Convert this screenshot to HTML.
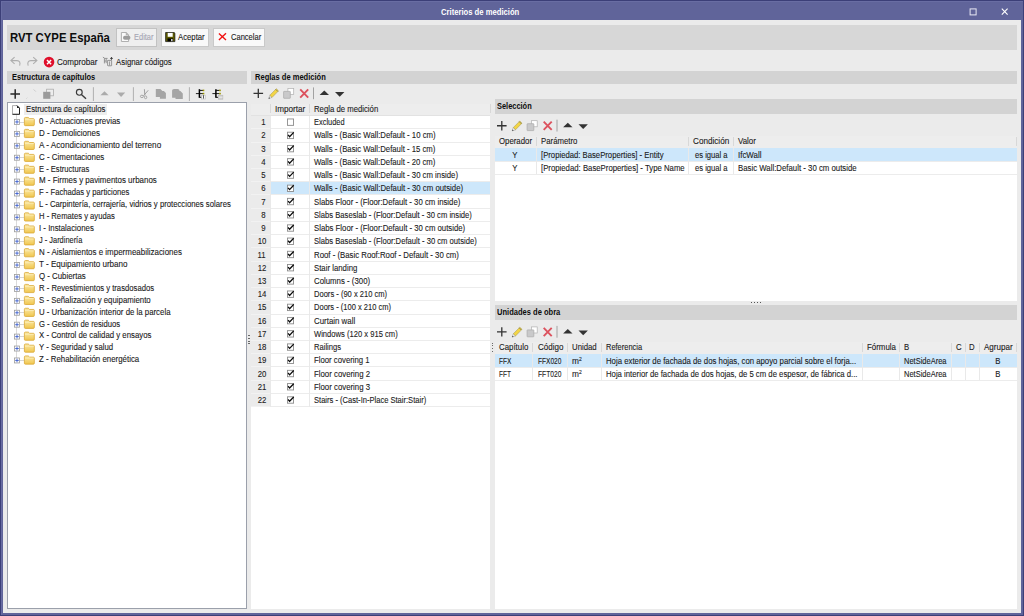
<!DOCTYPE html><html lang="es"><head><meta charset="utf-8"><title>Criterios de medición</title><style>
html,body{margin:0;padding:0}
body{width:1024px;height:616px;overflow:hidden;background:#60649a;position:relative;
 font-family:"Liberation Sans",sans-serif;font-size:8.4px;color:#1a1a1a;}
div,span,svg{position:absolute;box-sizing:border-box}
svg{overflow:visible}
.t{white-space:nowrap;line-height:12px;height:12px;-webkit-text-stroke:0.1px currentColor}
.b{font-weight:bold;color:#0c0c0c;-webkit-text-stroke:0}
.band{background:#d3d3d3}
.btn{border:1px solid #c9c9c9;background:#f9f9f9;top:28px;height:18.3px}
.hl{background:#ececec;height:1px}
.vl{background:#e9e9e9;width:1px}
.hs{background:#d8d8d8;width:1px}
.sel{background:#cde7fb}
.cb{width:7.2px;height:7.4px;border:0.8px solid #8d8d8d;background:#fff}
</style></head><body>
<div class="" style="left:0px;top:0px;width:1024px;height:616px;border:1px solid #3c3f78;"></div>
<div class="" style="left:1px;top:1px;width:1022px;height:1px;background:#696da3"></div>
<div class="" style="left:1px;top:1px;width:1px;height:614px;background:#696da3"></div>
<span class="t b" style="left:441.10px;top:6px;transform:scaleX(0.8508);transform-origin:0 50%;color:#fff;font-size:9px">Criterios de medición</span>
<svg style="left:965px;top:5px" width="50" height="14" viewBox="0 0 50 14"><rect x="5.1" y="3.9" width="6" height="6" fill="none" stroke="#e8e8f4" stroke-width="1"/><path d="M36.8 3.6 L42.6 9.6 M42.6 3.6 L36.8 9.6" stroke="#fff" stroke-width="1.1" fill="none"/></svg>
<div class="" style="left:3.1px;top:20px;width:1017.5px;height:592.7px;background:#ebebeb"></div>
<div class="" style="left:7px;top:25px;width:1010px;height:25px;background:#d7d7d7"></div>
<span class="t b" style="left:9.90px;top:30px;transform:scaleX(0.8853);transform-origin:0 50%;;font-size:12.8px;line-height:16px;height:16px">RVT CYPE España</span>
<div class="btn" style="left:116.2px;top:28px;width:40.6px;height:19px;background:#efefef;border-color:#c2c2c2"></div>
<div class="btn" style="left:161.4px;top:28px;width:47.7px;height:19px;"></div>
<div class="btn" style="left:213.4px;top:28px;width:51.2px;height:19px;"></div>
<svg style="left:120px;top:31px" width="12" height="12" viewBox="0 0 12 12"><path d="M1.4 1.5 H6.2 L8.6 3.9 V10.5 H1.4 Z" fill="#fafafa" stroke="#a8a8a8" stroke-width="0.9"/><path d="M6.2 1.5 V3.9 H8.6" fill="#bbb" stroke="#a8a8a8" stroke-width="0.7"/><rect x="3" y="4.8" width="7.4" height="3.9" rx="1.9" fill="#9c9c9c"/></svg>
<span class="t " style="left:133.50px;top:31px;transform:scaleX(0.8908);transform-origin:0 50%;color:#a4a4b2">Editar</span>
<svg style="left:165px;top:32px" width="11" height="10" viewBox="0 0 11 10"><g transform="translate(0.2 0.1)"><path d="M0.4 0.4 H9 L9.7 1.1 V9.5 H0.4 Z" fill="#5d5a00" stroke="#111" stroke-width="0.7"/><rect x="2.5" y="0.8" width="5" height="3.9" fill="#fff"/><rect x="2.3" y="6.3" width="5.6" height="2.9" fill="#000"/><rect x="6" y="6.9" width="1.3" height="2.2" fill="#fff"/></g></svg>
<span class="t " style="left:178.20px;top:31px;transform:scaleX(0.9247);transform-origin:0 50%">Aceptar</span>
<svg style="left:218px;top:32px" width="9" height="8" viewBox="0 0 9 8"><g transform="translate(0.0 0.6)"><path d="M0.9 0.8 L8 7.3 M8 0.6 L0.9 7.4" stroke="#f01010" stroke-width="1.35" fill="none"/></g></svg>
<span class="t " style="left:230.50px;top:31px;transform:scaleX(0.9007);transform-origin:0 50%">Cancelar</span>
<svg style="left:9px;top:55px" width="50" height="14" viewBox="0 0 50 14"><path d="M5.6 2.2 L1.9 5.6 L5.6 8.9 M2 5.6 H8 C10.6 5.6 11.6 7.8 10.6 10.6" fill="none" stroke="#aeaeae" stroke-width="1.1"/><path d="M24.2 2.2 L27.9 5.6 L24.2 8.9 M27.8 5.6 H21.8 C19.2 5.6 18.2 7.8 19.2 10.6" fill="none" stroke="#aeaeae" stroke-width="1.1"/><circle cx="40.05" cy="7.1" r="5.3" fill="#df0f2b"/><path d="M38 5 L42.1 9.2 M42.1 5 L38 9.2" stroke="#fff" stroke-width="1.5" fill="none"/></svg>
<span class="t " style="left:57.00px;top:56px;transform:scaleX(0.9641);transform-origin:0 50%">Comprobar</span>
<svg style="left:102px;top:56px" width="12" height="11" viewBox="0 0 12 11"><path d="M0.9 1.1 L2.8 2.4 H5.6 M2.4 2.4 V7.4 M4.2 2.6 V7.2 M2.4 5 H4.2 M5.6 4.4 V9.8 M5.6 4.4 H9.6 V9.8 M7.6 5.4 V9.4 M6 9.8 H9.4" fill="none" stroke="#808080" stroke-width="0.8"/><path d="M9.5 1 V3.8 M8.1 2.4 H10.9" stroke="#3c3c3c" stroke-width="0.9"/></svg>
<span class="t " style="left:116.00px;top:56px;transform:scaleX(0.9363);transform-origin:0 50%">Asignar códigos</span>
<div class="band" style="left:7px;top:71.1px;width:240px;height:12.7px;"></div>
<span class="t b" style="left:11.50px;top:71px;transform:scaleX(0.8939);transform-origin:0 50%">Estructura de capítulos</span>
<svg style="left:8px;top:86px" width="240" height="16" viewBox="0 0 240 16"><path d="M2.4 8 H12 M7.2 3.3 V12.7" stroke="#262626" stroke-width="1.5" fill="none"/><path d="M18.4 12.6 l0.9 -0.9 M25.6 3.4 l2.2 2.2" stroke="#c4c4c4" stroke-width="0.8" fill="none"/><rect x="38.6" y="3.2" width="6.8" height="6.6" fill="#ededed" stroke="#adadad" stroke-width="0.8"/><rect x="35.2" y="5.8" width="7.2" height="7" fill="#9b9b9b"/><circle cx="71.3" cy="6.3" r="2.9" fill="none" stroke="#3a3a3a" stroke-width="1.15"/><path d="M73.4 8.5 L78 12.7" stroke="#3a3a3a" stroke-width="1.4"/><path d="M85.4 1.2 V15" stroke="#a9a9a9" stroke-width="0.9"/><path d="M92.4 9.2 L96.5 5.3 L100.6 9.2 Z" fill="#ababab"/><path d="M109 6.6 L113.1 10.9 L117.2 6.6 Z" fill="#ababab"/><path d="M125.4 1.2 V15" stroke="#a9a9a9" stroke-width="0.9"/><path d="M136.4 3.2 L136.8 9.2 M140.2 4.3 L135.4 10" stroke="#9c9c9c" stroke-width="0.95" fill="none"/><ellipse cx="133.9" cy="10.4" rx="1.5" ry="1.2" fill="none" stroke="#9c9c9c" stroke-width="0.85"/><ellipse cx="137.6" cy="11.3" rx="1.2" ry="1.4" fill="none" stroke="#9c9c9c" stroke-width="0.85"/><path d="M147.8 3.1 H152.4 L154.4 5.1 V10.9 H147.8 Z M151.9 5.1 H155.9 L157.9 7.1 V12.7 H151.9 Z" fill="#a5a5a5"/><path d="M164.1 11.8 V4.6 Q164.1 3 166 3 H169.6 Q171.5 3 171.5 4.6 V11.8 Z M167.5 5 H172.4 L174.8 7.4 V13 H167.5 Z" fill="#a5a5a5"/><path d="M181.4 1.2 V15" stroke="#a9a9a9" stroke-width="0.9"/><path d="M187.9 7.6 H195" stroke="#222" stroke-width="1"/><path d="M191.4 3.2 V11.8" stroke="#000" stroke-width="1.5"/><path d="M191.4 4.4 H195 M191.4 11.3 H193.6" stroke="#111" stroke-width="1"/><rect x="194.7" y="3.6" width="1.6" height="1.6" fill="#9c9600"/><rect x="194.7" y="6.8" width="1.6" height="1.6" fill="#9c9600"/><rect x="193.7" y="9.2" width="3.9" height="3.8" fill="#f4f4f4" stroke="#b0b0b0" stroke-width="0.5"/><path d="M195.5 9.2 V12.6" stroke="#333" stroke-width="0.8"/><path d="M204.4 7.6 H211.5" stroke="#222" stroke-width="1"/><path d="M207.9 3.2 V11.8" stroke="#000" stroke-width="1.5"/><path d="M207.9 4.4 H211.5 M207.9 11.3 H210.2" stroke="#111" stroke-width="1"/><rect x="211.2" y="3.6" width="1.6" height="1.6" fill="#9c9600"/><rect x="211.2" y="6.8" width="1.6" height="1.6" fill="#9c9600"/><rect x="210.4" y="9.2" width="4.5" height="4" fill="#cfcfcf" stroke="#b4b4b4" stroke-width="0.5"/><path d="M210.8 11.2 H214.5" stroke="#f4f4f4" stroke-width="0.8"/></svg>
<div class="" style="left:7px;top:101.9px;width:240px;height:507px;background:#fff;border:0.9px solid #9ba0ab"></div>
<svg style="left:11px;top:104px" width="9" height="11" viewBox="0 0 9 11"><g transform="translate(0.6 0.7)"><path d="M0.9 0.9 H5.4 L7.9 3.4 V9.6 H0.9 Z" fill="#fff" stroke="#9a9a9a" stroke-width="0.8"/><path d="M5.4 0.9 L7.9 3.4 V9.6 H0.9" fill="none" stroke="#111" stroke-width="0.9"/><path d="M5.4 0.9 V3.4 H7.9 Z" fill="#222"/></g></svg>
<div class="" style="left:24.3px;top:104.1px;width:83px;height:10.6px;background:#ededed"></div>
<span class="t " style="left:26.10px;top:103px;transform:scaleX(0.9270);transform-origin:0 50%">Estructura de capítulos</span>
<svg width="0" height="0" style="left:0;top:0"><defs><linearGradient id="fg" x1="0" y1="0" x2="0" y2="1"><stop offset="0" stop-color="#fbe9a6"/><stop offset="1" stop-color="#f0c64e"/></linearGradient></defs></svg>
<div class="" style="left:16.4px;top:115px;width:0.9px;height:245.45px;background:#dadada"></div>
<div class="" style="left:19.6px;top:121.5px;width:4.5px;height:0.9px;background:#d6d6d6"></div>
<svg style="left:13px;top:118px" width="7" height="7" viewBox="0 0 7 7"><g transform="translate(0.7 0.65)"><rect x="0.8" y="0.8" width="5" height="5" fill="#fff" stroke="#9c9c9c" stroke-width="0.8"/><path d="M1.5 3.3 H5.1 M3.3 1.5 V5.1" stroke="#3558cc" stroke-width="0.85"/></g></svg>
<svg style="left:23px;top:116px" width="12" height="10" viewBox="0 0 12 10"><g transform="translate(0.3 0.55)"><path d="M1.1 2 Q1.1 0.9 2.1 0.9 H4.6 Q5.3 0.9 5.7 1.5 L6.2 2.1 H10.1 Q11 2.1 11 3 V8.2 Q11 9.1 10.1 9.1 H2 Q1.1 9.1 1.1 8.2 Z" fill="url(#fg)" stroke="#d9a733" stroke-width="0.8"/><path d="M1.6 3.1 H10.5" stroke="#fdf3c8" stroke-width="0.6"/></g></svg>
<span class="t " style="left:39.20px;top:115px;transform:scaleX(0.9377);transform-origin:0 50%">0 - Actuaciones previas</span>
<div class="" style="left:19.6px;top:133.43px;width:4.5px;height:0.9px;background:#d6d6d6"></div>
<svg style="left:13px;top:130px" width="7" height="7" viewBox="0 0 7 7"><g transform="translate(0.7 0.57)"><rect x="0.8" y="0.8" width="5" height="5" fill="#fff" stroke="#9c9c9c" stroke-width="0.8"/><path d="M1.5 3.3 H5.1 M3.3 1.5 V5.1" stroke="#3558cc" stroke-width="0.85"/></g></svg>
<svg style="left:23px;top:128px" width="12" height="10" viewBox="0 0 12 10"><g transform="translate(0.3 0.47)"><path d="M1.1 2 Q1.1 0.9 2.1 0.9 H4.6 Q5.3 0.9 5.7 1.5 L6.2 2.1 H10.1 Q11 2.1 11 3 V8.2 Q11 9.1 10.1 9.1 H2 Q1.1 9.1 1.1 8.2 Z" fill="url(#fg)" stroke="#d9a733" stroke-width="0.8"/><path d="M1.6 3.1 H10.5" stroke="#fdf3c8" stroke-width="0.6"/></g></svg>
<span class="t " style="left:39.20px;top:127px;transform:scaleX(0.9551);transform-origin:0 50%">D - Demoliciones</span>
<div class="" style="left:19.6px;top:145.35px;width:4.5px;height:0.9px;background:#d6d6d6"></div>
<svg style="left:13px;top:142px" width="7" height="7" viewBox="0 0 7 7"><g transform="translate(0.7 0.5)"><rect x="0.8" y="0.8" width="5" height="5" fill="#fff" stroke="#9c9c9c" stroke-width="0.8"/><path d="M1.5 3.3 H5.1 M3.3 1.5 V5.1" stroke="#3558cc" stroke-width="0.85"/></g></svg>
<svg style="left:23px;top:140px" width="12" height="10" viewBox="0 0 12 10"><g transform="translate(0.3 0.4)"><path d="M1.1 2 Q1.1 0.9 2.1 0.9 H4.6 Q5.3 0.9 5.7 1.5 L6.2 2.1 H10.1 Q11 2.1 11 3 V8.2 Q11 9.1 10.1 9.1 H2 Q1.1 9.1 1.1 8.2 Z" fill="url(#fg)" stroke="#d9a733" stroke-width="0.8"/><path d="M1.6 3.1 H10.5" stroke="#fdf3c8" stroke-width="0.6"/></g></svg>
<span class="t " style="left:39.20px;top:139px;transform:scaleX(0.9756);transform-origin:0 50%">A - Acondicionamiento del terreno</span>
<div class="" style="left:19.6px;top:157.28px;width:4.5px;height:0.9px;background:#d6d6d6"></div>
<svg style="left:13px;top:154px" width="7" height="7" viewBox="0 0 7 7"><g transform="translate(0.7 0.42)"><rect x="0.8" y="0.8" width="5" height="5" fill="#fff" stroke="#9c9c9c" stroke-width="0.8"/><path d="M1.5 3.3 H5.1 M3.3 1.5 V5.1" stroke="#3558cc" stroke-width="0.85"/></g></svg>
<svg style="left:23px;top:152px" width="12" height="10" viewBox="0 0 12 10"><g transform="translate(0.3 0.32)"><path d="M1.1 2 Q1.1 0.9 2.1 0.9 H4.6 Q5.3 0.9 5.7 1.5 L6.2 2.1 H10.1 Q11 2.1 11 3 V8.2 Q11 9.1 10.1 9.1 H2 Q1.1 9.1 1.1 8.2 Z" fill="url(#fg)" stroke="#d9a733" stroke-width="0.8"/><path d="M1.6 3.1 H10.5" stroke="#fdf3c8" stroke-width="0.6"/></g></svg>
<span class="t " style="left:39.20px;top:151px;transform:scaleX(0.9479);transform-origin:0 50%">C - Cimentaciones</span>
<div class="" style="left:19.6px;top:169.2px;width:4.5px;height:0.9px;background:#d6d6d6"></div>
<svg style="left:13px;top:166px" width="7" height="7" viewBox="0 0 7 7"><g transform="translate(0.7 0.35)"><rect x="0.8" y="0.8" width="5" height="5" fill="#fff" stroke="#9c9c9c" stroke-width="0.8"/><path d="M1.5 3.3 H5.1 M3.3 1.5 V5.1" stroke="#3558cc" stroke-width="0.85"/></g></svg>
<svg style="left:23px;top:164px" width="12" height="10" viewBox="0 0 12 10"><g transform="translate(0.3 0.25)"><path d="M1.1 2 Q1.1 0.9 2.1 0.9 H4.6 Q5.3 0.9 5.7 1.5 L6.2 2.1 H10.1 Q11 2.1 11 3 V8.2 Q11 9.1 10.1 9.1 H2 Q1.1 9.1 1.1 8.2 Z" fill="url(#fg)" stroke="#d9a733" stroke-width="0.8"/><path d="M1.6 3.1 H10.5" stroke="#fdf3c8" stroke-width="0.6"/></g></svg>
<span class="t " style="left:39.20px;top:163px;transform:scaleX(0.9063);transform-origin:0 50%">E - Estructuras</span>
<div class="" style="left:19.6px;top:181.12px;width:4.5px;height:0.9px;background:#d6d6d6"></div>
<svg style="left:13px;top:178px" width="7" height="7" viewBox="0 0 7 7"><g transform="translate(0.7 0.27)"><rect x="0.8" y="0.8" width="5" height="5" fill="#fff" stroke="#9c9c9c" stroke-width="0.8"/><path d="M1.5 3.3 H5.1 M3.3 1.5 V5.1" stroke="#3558cc" stroke-width="0.85"/></g></svg>
<svg style="left:23px;top:176px" width="12" height="10" viewBox="0 0 12 10"><g transform="translate(0.3 0.17)"><path d="M1.1 2 Q1.1 0.9 2.1 0.9 H4.6 Q5.3 0.9 5.7 1.5 L6.2 2.1 H10.1 Q11 2.1 11 3 V8.2 Q11 9.1 10.1 9.1 H2 Q1.1 9.1 1.1 8.2 Z" fill="url(#fg)" stroke="#d9a733" stroke-width="0.8"/><path d="M1.6 3.1 H10.5" stroke="#fdf3c8" stroke-width="0.6"/></g></svg>
<span class="t " style="left:39.20px;top:174px;transform:scaleX(0.9479);transform-origin:0 50%">M - Firmes y pavimentos urbanos</span>
<div class="" style="left:19.6px;top:193.05px;width:4.5px;height:0.9px;background:#d6d6d6"></div>
<svg style="left:13px;top:190px" width="7" height="7" viewBox="0 0 7 7"><g transform="translate(0.7 0.2)"><rect x="0.8" y="0.8" width="5" height="5" fill="#fff" stroke="#9c9c9c" stroke-width="0.8"/><path d="M1.5 3.3 H5.1 M3.3 1.5 V5.1" stroke="#3558cc" stroke-width="0.85"/></g></svg>
<svg style="left:23px;top:188px" width="12" height="10" viewBox="0 0 12 10"><g transform="translate(0.3 0.1)"><path d="M1.1 2 Q1.1 0.9 2.1 0.9 H4.6 Q5.3 0.9 5.7 1.5 L6.2 2.1 H10.1 Q11 2.1 11 3 V8.2 Q11 9.1 10.1 9.1 H2 Q1.1 9.1 1.1 8.2 Z" fill="url(#fg)" stroke="#d9a733" stroke-width="0.8"/><path d="M1.6 3.1 H10.5" stroke="#fdf3c8" stroke-width="0.6"/></g></svg>
<span class="t " style="left:39.20px;top:186px;transform:scaleX(0.9160);transform-origin:0 50%">F - Fachadas y particiones</span>
<div class="" style="left:19.6px;top:204.97px;width:4.5px;height:0.9px;background:#d6d6d6"></div>
<svg style="left:13px;top:202px" width="7" height="7" viewBox="0 0 7 7"><g transform="translate(0.7 0.12)"><rect x="0.8" y="0.8" width="5" height="5" fill="#fff" stroke="#9c9c9c" stroke-width="0.8"/><path d="M1.5 3.3 H5.1 M3.3 1.5 V5.1" stroke="#3558cc" stroke-width="0.85"/></g></svg>
<svg style="left:23px;top:200px" width="12" height="10" viewBox="0 0 12 10"><g transform="translate(0.3 0.02)"><path d="M1.1 2 Q1.1 0.9 2.1 0.9 H4.6 Q5.3 0.9 5.7 1.5 L6.2 2.1 H10.1 Q11 2.1 11 3 V8.2 Q11 9.1 10.1 9.1 H2 Q1.1 9.1 1.1 8.2 Z" fill="url(#fg)" stroke="#d9a733" stroke-width="0.8"/><path d="M1.6 3.1 H10.5" stroke="#fdf3c8" stroke-width="0.6"/></g></svg>
<span class="t " style="left:39.20px;top:198px;transform:scaleX(0.9232);transform-origin:0 50%">L - Carpintería, cerrajería, vidrios y protecciones solares</span>
<div class="" style="left:19.6px;top:216.9px;width:4.5px;height:0.9px;background:#d6d6d6"></div>
<svg style="left:13px;top:214px" width="7" height="7" viewBox="0 0 7 7"><g transform="translate(0.7 0.05)"><rect x="0.8" y="0.8" width="5" height="5" fill="#fff" stroke="#9c9c9c" stroke-width="0.8"/><path d="M1.5 3.3 H5.1 M3.3 1.5 V5.1" stroke="#3558cc" stroke-width="0.85"/></g></svg>
<svg style="left:23px;top:211px" width="12" height="10" viewBox="0 0 12 10"><g transform="translate(0.3 0.95)"><path d="M1.1 2 Q1.1 0.9 2.1 0.9 H4.6 Q5.3 0.9 5.7 1.5 L6.2 2.1 H10.1 Q11 2.1 11 3 V8.2 Q11 9.1 10.1 9.1 H2 Q1.1 9.1 1.1 8.2 Z" fill="url(#fg)" stroke="#d9a733" stroke-width="0.8"/><path d="M1.6 3.1 H10.5" stroke="#fdf3c8" stroke-width="0.6"/></g></svg>
<span class="t " style="left:39.20px;top:210px;transform:scaleX(0.9148);transform-origin:0 50%">H - Remates y ayudas</span>
<div class="" style="left:19.6px;top:228.83px;width:4.5px;height:0.9px;background:#d6d6d6"></div>
<svg style="left:13px;top:225px" width="7" height="7" viewBox="0 0 7 7"><g transform="translate(0.7 0.97)"><rect x="0.8" y="0.8" width="5" height="5" fill="#fff" stroke="#9c9c9c" stroke-width="0.8"/><path d="M1.5 3.3 H5.1 M3.3 1.5 V5.1" stroke="#3558cc" stroke-width="0.85"/></g></svg>
<svg style="left:23px;top:223px" width="12" height="10" viewBox="0 0 12 10"><g transform="translate(0.3 0.88)"><path d="M1.1 2 Q1.1 0.9 2.1 0.9 H4.6 Q5.3 0.9 5.7 1.5 L6.2 2.1 H10.1 Q11 2.1 11 3 V8.2 Q11 9.1 10.1 9.1 H2 Q1.1 9.1 1.1 8.2 Z" fill="url(#fg)" stroke="#d9a733" stroke-width="0.8"/><path d="M1.6 3.1 H10.5" stroke="#fdf3c8" stroke-width="0.6"/></g></svg>
<span class="t " style="left:39.20px;top:222px;transform:scaleX(0.9343);transform-origin:0 50%">I - Instalaciones</span>
<div class="" style="left:19.6px;top:240.75px;width:4.5px;height:0.9px;background:#d6d6d6"></div>
<svg style="left:13px;top:237px" width="7" height="7" viewBox="0 0 7 7"><g transform="translate(0.7 0.9)"><rect x="0.8" y="0.8" width="5" height="5" fill="#fff" stroke="#9c9c9c" stroke-width="0.8"/><path d="M1.5 3.3 H5.1 M3.3 1.5 V5.1" stroke="#3558cc" stroke-width="0.85"/></g></svg>
<svg style="left:23px;top:235px" width="12" height="10" viewBox="0 0 12 10"><g transform="translate(0.3 0.8)"><path d="M1.1 2 Q1.1 0.9 2.1 0.9 H4.6 Q5.3 0.9 5.7 1.5 L6.2 2.1 H10.1 Q11 2.1 11 3 V8.2 Q11 9.1 10.1 9.1 H2 Q1.1 9.1 1.1 8.2 Z" fill="url(#fg)" stroke="#d9a733" stroke-width="0.8"/><path d="M1.6 3.1 H10.5" stroke="#fdf3c8" stroke-width="0.6"/></g></svg>
<span class="t " style="left:39.20px;top:234px;transform:scaleX(0.8859);transform-origin:0 50%">J - Jardinería</span>
<div class="" style="left:19.6px;top:252.68px;width:4.5px;height:0.9px;background:#d6d6d6"></div>
<svg style="left:13px;top:249px" width="7" height="7" viewBox="0 0 7 7"><g transform="translate(0.7 0.82)"><rect x="0.8" y="0.8" width="5" height="5" fill="#fff" stroke="#9c9c9c" stroke-width="0.8"/><path d="M1.5 3.3 H5.1 M3.3 1.5 V5.1" stroke="#3558cc" stroke-width="0.85"/></g></svg>
<svg style="left:23px;top:247px" width="12" height="10" viewBox="0 0 12 10"><g transform="translate(0.3 0.72)"><path d="M1.1 2 Q1.1 0.9 2.1 0.9 H4.6 Q5.3 0.9 5.7 1.5 L6.2 2.1 H10.1 Q11 2.1 11 3 V8.2 Q11 9.1 10.1 9.1 H2 Q1.1 9.1 1.1 8.2 Z" fill="url(#fg)" stroke="#d9a733" stroke-width="0.8"/><path d="M1.6 3.1 H10.5" stroke="#fdf3c8" stroke-width="0.6"/></g></svg>
<span class="t " style="left:39.20px;top:246px;transform:scaleX(0.9504);transform-origin:0 50%">N - Aislamientos e impermeabilizaciones</span>
<div class="" style="left:19.6px;top:264.6px;width:4.5px;height:0.9px;background:#d6d6d6"></div>
<svg style="left:13px;top:261px" width="7" height="7" viewBox="0 0 7 7"><g transform="translate(0.7 0.75)"><rect x="0.8" y="0.8" width="5" height="5" fill="#fff" stroke="#9c9c9c" stroke-width="0.8"/><path d="M1.5 3.3 H5.1 M3.3 1.5 V5.1" stroke="#3558cc" stroke-width="0.85"/></g></svg>
<svg style="left:23px;top:259px" width="12" height="10" viewBox="0 0 12 10"><g transform="translate(0.3 0.65)"><path d="M1.1 2 Q1.1 0.9 2.1 0.9 H4.6 Q5.3 0.9 5.7 1.5 L6.2 2.1 H10.1 Q11 2.1 11 3 V8.2 Q11 9.1 10.1 9.1 H2 Q1.1 9.1 1.1 8.2 Z" fill="url(#fg)" stroke="#d9a733" stroke-width="0.8"/><path d="M1.6 3.1 H10.5" stroke="#fdf3c8" stroke-width="0.6"/></g></svg>
<span class="t " style="left:39.20px;top:258px;transform:scaleX(0.9616);transform-origin:0 50%">T - Equipamiento urbano</span>
<div class="" style="left:19.6px;top:276.53px;width:4.5px;height:0.9px;background:#d6d6d6"></div>
<svg style="left:13px;top:273px" width="7" height="7" viewBox="0 0 7 7"><g transform="translate(0.7 0.68)"><rect x="0.8" y="0.8" width="5" height="5" fill="#fff" stroke="#9c9c9c" stroke-width="0.8"/><path d="M1.5 3.3 H5.1 M3.3 1.5 V5.1" stroke="#3558cc" stroke-width="0.85"/></g></svg>
<svg style="left:23px;top:271px" width="12" height="10" viewBox="0 0 12 10"><g transform="translate(0.3 0.57)"><path d="M1.1 2 Q1.1 0.9 2.1 0.9 H4.6 Q5.3 0.9 5.7 1.5 L6.2 2.1 H10.1 Q11 2.1 11 3 V8.2 Q11 9.1 10.1 9.1 H2 Q1.1 9.1 1.1 8.2 Z" fill="url(#fg)" stroke="#d9a733" stroke-width="0.8"/><path d="M1.6 3.1 H10.5" stroke="#fdf3c8" stroke-width="0.6"/></g></svg>
<span class="t " style="left:39.20px;top:270px;transform:scaleX(0.9375);transform-origin:0 50%">Q - Cubiertas</span>
<div class="" style="left:19.6px;top:288.45px;width:4.5px;height:0.9px;background:#d6d6d6"></div>
<svg style="left:13px;top:285px" width="7" height="7" viewBox="0 0 7 7"><g transform="translate(0.7 0.6)"><rect x="0.8" y="0.8" width="5" height="5" fill="#fff" stroke="#9c9c9c" stroke-width="0.8"/><path d="M1.5 3.3 H5.1 M3.3 1.5 V5.1" stroke="#3558cc" stroke-width="0.85"/></g></svg>
<svg style="left:23px;top:283px" width="12" height="10" viewBox="0 0 12 10"><g transform="translate(0.3 0.5)"><path d="M1.1 2 Q1.1 0.9 2.1 0.9 H4.6 Q5.3 0.9 5.7 1.5 L6.2 2.1 H10.1 Q11 2.1 11 3 V8.2 Q11 9.1 10.1 9.1 H2 Q1.1 9.1 1.1 8.2 Z" fill="url(#fg)" stroke="#d9a733" stroke-width="0.8"/><path d="M1.6 3.1 H10.5" stroke="#fdf3c8" stroke-width="0.6"/></g></svg>
<span class="t " style="left:39.20px;top:282px;transform:scaleX(0.9192);transform-origin:0 50%">R - Revestimientos y trasdosados</span>
<div class="" style="left:19.6px;top:300.38px;width:4.5px;height:0.9px;background:#d6d6d6"></div>
<svg style="left:13px;top:297px" width="7" height="7" viewBox="0 0 7 7"><g transform="translate(0.7 0.53)"><rect x="0.8" y="0.8" width="5" height="5" fill="#fff" stroke="#9c9c9c" stroke-width="0.8"/><path d="M1.5 3.3 H5.1 M3.3 1.5 V5.1" stroke="#3558cc" stroke-width="0.85"/></g></svg>
<svg style="left:23px;top:295px" width="12" height="10" viewBox="0 0 12 10"><g transform="translate(0.3 0.43)"><path d="M1.1 2 Q1.1 0.9 2.1 0.9 H4.6 Q5.3 0.9 5.7 1.5 L6.2 2.1 H10.1 Q11 2.1 11 3 V8.2 Q11 9.1 10.1 9.1 H2 Q1.1 9.1 1.1 8.2 Z" fill="url(#fg)" stroke="#d9a733" stroke-width="0.8"/><path d="M1.6 3.1 H10.5" stroke="#fdf3c8" stroke-width="0.6"/></g></svg>
<span class="t " style="left:39.20px;top:294px;transform:scaleX(0.9335);transform-origin:0 50%">S - Señalización y equipamiento</span>
<div class="" style="left:19.6px;top:312.3px;width:4.5px;height:0.9px;background:#d6d6d6"></div>
<svg style="left:13px;top:309px" width="7" height="7" viewBox="0 0 7 7"><g transform="translate(0.7 0.45)"><rect x="0.8" y="0.8" width="5" height="5" fill="#fff" stroke="#9c9c9c" stroke-width="0.8"/><path d="M1.5 3.3 H5.1 M3.3 1.5 V5.1" stroke="#3558cc" stroke-width="0.85"/></g></svg>
<svg style="left:23px;top:307px" width="12" height="10" viewBox="0 0 12 10"><g transform="translate(0.3 0.35)"><path d="M1.1 2 Q1.1 0.9 2.1 0.9 H4.6 Q5.3 0.9 5.7 1.5 L6.2 2.1 H10.1 Q11 2.1 11 3 V8.2 Q11 9.1 10.1 9.1 H2 Q1.1 9.1 1.1 8.2 Z" fill="url(#fg)" stroke="#d9a733" stroke-width="0.8"/><path d="M1.6 3.1 H10.5" stroke="#fdf3c8" stroke-width="0.6"/></g></svg>
<span class="t " style="left:39.20px;top:306px;transform:scaleX(0.9353);transform-origin:0 50%">U - Urbanización interior de la parcela</span>
<div class="" style="left:19.6px;top:324.23px;width:4.5px;height:0.9px;background:#d6d6d6"></div>
<svg style="left:13px;top:321px" width="7" height="7" viewBox="0 0 7 7"><g transform="translate(0.7 0.38)"><rect x="0.8" y="0.8" width="5" height="5" fill="#fff" stroke="#9c9c9c" stroke-width="0.8"/><path d="M1.5 3.3 H5.1 M3.3 1.5 V5.1" stroke="#3558cc" stroke-width="0.85"/></g></svg>
<svg style="left:23px;top:319px" width="12" height="10" viewBox="0 0 12 10"><g transform="translate(0.3 0.28)"><path d="M1.1 2 Q1.1 0.9 2.1 0.9 H4.6 Q5.3 0.9 5.7 1.5 L6.2 2.1 H10.1 Q11 2.1 11 3 V8.2 Q11 9.1 10.1 9.1 H2 Q1.1 9.1 1.1 8.2 Z" fill="url(#fg)" stroke="#d9a733" stroke-width="0.8"/><path d="M1.6 3.1 H10.5" stroke="#fdf3c8" stroke-width="0.6"/></g></svg>
<span class="t " style="left:39.20px;top:318px;transform:scaleX(0.9180);transform-origin:0 50%">G - Gestión de residuos</span>
<div class="" style="left:19.6px;top:336.15px;width:4.5px;height:0.9px;background:#d6d6d6"></div>
<svg style="left:13px;top:333px" width="7" height="7" viewBox="0 0 7 7"><g transform="translate(0.7 0.3)"><rect x="0.8" y="0.8" width="5" height="5" fill="#fff" stroke="#9c9c9c" stroke-width="0.8"/><path d="M1.5 3.3 H5.1 M3.3 1.5 V5.1" stroke="#3558cc" stroke-width="0.85"/></g></svg>
<svg style="left:23px;top:331px" width="12" height="10" viewBox="0 0 12 10"><g transform="translate(0.3 0.2)"><path d="M1.1 2 Q1.1 0.9 2.1 0.9 H4.6 Q5.3 0.9 5.7 1.5 L6.2 2.1 H10.1 Q11 2.1 11 3 V8.2 Q11 9.1 10.1 9.1 H2 Q1.1 9.1 1.1 8.2 Z" fill="url(#fg)" stroke="#d9a733" stroke-width="0.8"/><path d="M1.6 3.1 H10.5" stroke="#fdf3c8" stroke-width="0.6"/></g></svg>
<span class="t " style="left:39.20px;top:329px;transform:scaleX(0.9322);transform-origin:0 50%">X - Control de calidad y ensayos</span>
<div class="" style="left:19.6px;top:348.08px;width:4.5px;height:0.9px;background:#d6d6d6"></div>
<svg style="left:13px;top:345px" width="7" height="7" viewBox="0 0 7 7"><g transform="translate(0.7 0.23)"><rect x="0.8" y="0.8" width="5" height="5" fill="#fff" stroke="#9c9c9c" stroke-width="0.8"/><path d="M1.5 3.3 H5.1 M3.3 1.5 V5.1" stroke="#3558cc" stroke-width="0.85"/></g></svg>
<svg style="left:23px;top:343px" width="12" height="10" viewBox="0 0 12 10"><g transform="translate(0.3 0.12)"><path d="M1.1 2 Q1.1 0.9 2.1 0.9 H4.6 Q5.3 0.9 5.7 1.5 L6.2 2.1 H10.1 Q11 2.1 11 3 V8.2 Q11 9.1 10.1 9.1 H2 Q1.1 9.1 1.1 8.2 Z" fill="url(#fg)" stroke="#d9a733" stroke-width="0.8"/><path d="M1.6 3.1 H10.5" stroke="#fdf3c8" stroke-width="0.6"/></g></svg>
<span class="t " style="left:39.20px;top:341px;transform:scaleX(0.9270);transform-origin:0 50%">Y - Seguridad y salud</span>
<div class="" style="left:19.6px;top:360.0px;width:4.5px;height:0.9px;background:#d6d6d6"></div>
<svg style="left:13px;top:357px" width="7" height="7" viewBox="0 0 7 7"><g transform="translate(0.7 0.15)"><rect x="0.8" y="0.8" width="5" height="5" fill="#fff" stroke="#9c9c9c" stroke-width="0.8"/><path d="M1.5 3.3 H5.1 M3.3 1.5 V5.1" stroke="#3558cc" stroke-width="0.85"/></g></svg>
<svg style="left:23px;top:355px" width="12" height="10" viewBox="0 0 12 10"><g transform="translate(0.3 0.05)"><path d="M1.1 2 Q1.1 0.9 2.1 0.9 H4.6 Q5.3 0.9 5.7 1.5 L6.2 2.1 H10.1 Q11 2.1 11 3 V8.2 Q11 9.1 10.1 9.1 H2 Q1.1 9.1 1.1 8.2 Z" fill="url(#fg)" stroke="#d9a733" stroke-width="0.8"/><path d="M1.6 3.1 H10.5" stroke="#fdf3c8" stroke-width="0.6"/></g></svg>
<span class="t " style="left:39.20px;top:353px;transform:scaleX(0.9399);transform-origin:0 50%">Z - Rehabilitación energética</span>
<div class="" style="left:248px;top:335.2px;width:2px;height:1.2px;background:#6a6a6a"></div>
<div class="" style="left:248px;top:337.9px;width:2px;height:1.2px;background:#6a6a6a"></div>
<div class="" style="left:248px;top:340.59999999999997px;width:2px;height:1.2px;background:#6a6a6a"></div>
<div class="" style="left:248px;top:343.3px;width:2px;height:1.2px;background:#6a6a6a"></div>
<div class="band" style="left:251px;top:71.1px;width:766px;height:12.7px;"></div>
<span class="t b" style="left:255.20px;top:71px;transform:scaleX(0.9001);transform-origin:0 50%">Reglas de medición</span>
<svg style="left:252px;top:87px" width="96" height="14" viewBox="0 0 96 14"><path d="M1.5 6.45 H11.1 M6.3 1.8 V11.1" stroke="#333" stroke-width="1.3" fill="none"/><path d="M16.7 11.6 L17.85 8.23 L20.05 10.41 Z" fill="#f8f8f8" stroke="#8f8f8f" stroke-width="0.5"/><path d="M16.6 11.7 L17.1 10.2 L18.1 11.2 Z" fill="#3a3a3a"/><path d="M17.85 8.23 L24.32 1.69 L26.52 3.87 L20.05 10.41 Z" fill="#f3d545" stroke="#a59a58" stroke-width="0.55"/><path d="M23.7 2.3 L25.9 4.5" stroke="#857f4c" stroke-width="0.9"/><rect x="35.9" y="1.4" width="5.8" height="6.1" fill="#fff" stroke="#b0b0b0" stroke-width="0.7"/><rect x="31.6" y="4.4" width="6.7" height="6.9" rx="0.4" fill="#c9c9ca" stroke="#adadad" stroke-width="0.8"/><path d="M48.2 2.3 L56.2 10.6 M56.2 2.3 L48.2 10.6" stroke="#dc525e" stroke-width="1.9" fill="none"/><path d="M61.5 0.4 V12.2" stroke="#9a9a9a" stroke-width="0.9"/><path d="M67.6 8 L72.3 3.4 L77 8 Z" fill="#333"/><path d="M83 4.9 L87.7 9.7 L92.4 4.9 Z" fill="#333"/></svg>
<div class="" style="left:251px;top:103.5px;width:239.39999999999998px;height:505.2px;background:#fff"></div>
<div class="" style="left:251px;top:103.5px;width:239.39999999999998px;height:12px;background:#ededed"></div>
<div class="hs" style="left:270px;top:104.2px;width:1px;height:8.8px;"></div>
<div class="hs" style="left:309.4px;top:104.2px;width:1px;height:8.8px;"></div>
<div class="hs" style="left:489.6px;top:104.2px;width:1px;height:8.8px;"></div>
<span class="t " style="left:274.90px;top:103px;transform:scaleX(0.9715);transform-origin:0 50%">Importar</span>
<span class="t " style="left:314.20px;top:103px;transform:scaleX(0.9254);transform-origin:0 50%">Regla de medición</span>
<div class="" style="left:251px;top:115.55px;width:20px;height:291.06px;background:#ebebeb"></div>
<div class="" style="left:251px;top:114.95px;width:239.39999999999998px;height:1px;background:#e2e2e2"></div>
<div class="hl" style="left:251px;top:128.28px;width:239.39999999999998px;height:1px;"></div>
<div class="" style="left:251px;top:128.28px;width:19.5px;height:1px;background:#f2f2f2"></div>
<span class="t " style="left:261.33px;top:116px;transform:scaleX(0.9300);transform-origin:100% 50%">1</span>
<svg style="left:286px;top:117px" width="9" height="9" viewBox="0 0 9 9"><g transform="translate(0.5 0.96)"><rect x="0.95" y="1" width="6.1" height="6.4" fill="#fff" stroke="#8c8c8c" stroke-width="0.9"/></g></svg>
<span class="t " style="left:314.20px;top:116px;transform:scaleX(0.8882);transform-origin:0 50%">Excluded</span>
<div class="hl" style="left:251px;top:141.51px;width:239.39999999999998px;height:1px;"></div>
<div class="" style="left:251px;top:141.51px;width:19.5px;height:1px;background:#f2f2f2"></div>
<span class="t " style="left:261.33px;top:129px;transform:scaleX(0.9300);transform-origin:100% 50%">2</span>
<svg style="left:286px;top:131px" width="9" height="9" viewBox="0 0 9 9"><g transform="translate(0.5 0.2)"><rect x="0.95" y="1" width="6.1" height="6.4" fill="#fff" stroke="#8c8c8c" stroke-width="0.9"/><path d="M1.6 3.7 L3.1 5.5 L7.2 1.2" fill="none" stroke="#0a0a0a" stroke-width="1.3"/></g></svg>
<span class="t " style="left:314.20px;top:129px;transform:scaleX(0.9277);transform-origin:0 50%">Walls - (Basic Wall:Default - 10 cm)</span>
<div class="hl" style="left:251px;top:154.74px;width:239.39999999999998px;height:1px;"></div>
<div class="" style="left:251px;top:154.74px;width:19.5px;height:1px;background:#f2f2f2"></div>
<span class="t " style="left:261.33px;top:143px;transform:scaleX(0.9300);transform-origin:100% 50%">3</span>
<svg style="left:286px;top:144px" width="9" height="9" viewBox="0 0 9 9"><g transform="translate(0.5 0.43)"><rect x="0.95" y="1" width="6.1" height="6.4" fill="#fff" stroke="#8c8c8c" stroke-width="0.9"/><path d="M1.6 3.7 L3.1 5.5 L7.2 1.2" fill="none" stroke="#0a0a0a" stroke-width="1.3"/></g></svg>
<span class="t " style="left:314.20px;top:143px;transform:scaleX(0.9262);transform-origin:0 50%">Walls - (Basic Wall:Default - 15 cm)</span>
<div class="hl" style="left:251px;top:167.97px;width:239.39999999999998px;height:1px;"></div>
<div class="" style="left:251px;top:167.97px;width:19.5px;height:1px;background:#f2f2f2"></div>
<span class="t " style="left:261.33px;top:156px;transform:scaleX(0.9300);transform-origin:100% 50%">4</span>
<svg style="left:286px;top:157px" width="9" height="9" viewBox="0 0 9 9"><g transform="translate(0.5 0.66)"><rect x="0.95" y="1" width="6.1" height="6.4" fill="#fff" stroke="#8c8c8c" stroke-width="0.9"/><path d="M1.6 3.7 L3.1 5.5 L7.2 1.2" fill="none" stroke="#0a0a0a" stroke-width="1.3"/></g></svg>
<span class="t " style="left:314.20px;top:156px;transform:scaleX(0.9262);transform-origin:0 50%">Walls - (Basic Wall:Default - 20 cm)</span>
<div class="hl" style="left:251px;top:181.2px;width:239.39999999999998px;height:1px;"></div>
<div class="" style="left:251px;top:181.2px;width:19.5px;height:1px;background:#f2f2f2"></div>
<span class="t " style="left:261.33px;top:169px;transform:scaleX(0.9300);transform-origin:100% 50%">5</span>
<svg style="left:286px;top:170px" width="9" height="9" viewBox="0 0 9 9"><g transform="translate(0.5 0.89)"><rect x="0.95" y="1" width="6.1" height="6.4" fill="#fff" stroke="#8c8c8c" stroke-width="0.9"/><path d="M1.6 3.7 L3.1 5.5 L7.2 1.2" fill="none" stroke="#0a0a0a" stroke-width="1.3"/></g></svg>
<span class="t " style="left:314.20px;top:169px;transform:scaleX(0.9273);transform-origin:0 50%">Walls - (Basic Wall:Default - 30 cm inside)</span>
<div class="sel" style="left:271px;top:182.0px;width:219.39999999999998px;height:12.93px;"></div>
<div class="hl" style="left:251px;top:194.43px;width:239.39999999999998px;height:1px;"></div>
<div class="" style="left:251px;top:194.43px;width:19.5px;height:1px;background:#f2f2f2"></div>
<span class="t " style="left:261.33px;top:182px;transform:scaleX(0.9300);transform-origin:100% 50%">6</span>
<svg style="left:286px;top:184px" width="9" height="9" viewBox="0 0 9 9"><g transform="translate(0.5 0.12)"><rect x="0.95" y="1" width="6.1" height="6.4" fill="#fff" stroke="#8c8c8c" stroke-width="0.9"/><path d="M1.6 3.7 L3.1 5.5 L7.2 1.2" fill="none" stroke="#0a0a0a" stroke-width="1.3"/></g></svg>
<span class="t " style="left:314.20px;top:182px;transform:scaleX(0.9295);transform-origin:0 50%">Walls - (Basic Wall:Default - 30 cm outside)</span>
<div class="hl" style="left:251px;top:207.66px;width:239.39999999999998px;height:1px;"></div>
<div class="" style="left:251px;top:207.66px;width:19.5px;height:1px;background:#f2f2f2"></div>
<span class="t " style="left:261.33px;top:196px;transform:scaleX(0.9300);transform-origin:100% 50%">7</span>
<svg style="left:286px;top:197px" width="9" height="9" viewBox="0 0 9 9"><g transform="translate(0.5 0.35)"><rect x="0.95" y="1" width="6.1" height="6.4" fill="#fff" stroke="#8c8c8c" stroke-width="0.9"/><path d="M1.6 3.7 L3.1 5.5 L7.2 1.2" fill="none" stroke="#0a0a0a" stroke-width="1.3"/></g></svg>
<span class="t " style="left:314.20px;top:196px;transform:scaleX(0.9272);transform-origin:0 50%">Slabs Floor - (Floor:Default - 30 cm inside)</span>
<div class="hl" style="left:251px;top:220.89px;width:239.39999999999998px;height:1px;"></div>
<div class="" style="left:251px;top:220.89px;width:19.5px;height:1px;background:#f2f2f2"></div>
<span class="t " style="left:261.33px;top:209px;transform:scaleX(0.9300);transform-origin:100% 50%">8</span>
<svg style="left:286px;top:210px" width="9" height="9" viewBox="0 0 9 9"><g transform="translate(0.5 0.58)"><rect x="0.95" y="1" width="6.1" height="6.4" fill="#fff" stroke="#8c8c8c" stroke-width="0.9"/><path d="M1.6 3.7 L3.1 5.5 L7.2 1.2" fill="none" stroke="#0a0a0a" stroke-width="1.3"/></g></svg>
<span class="t " style="left:314.20px;top:209px;transform:scaleX(0.9119);transform-origin:0 50%">Slabs Baseslab - (Floor:Default - 30 cm inside)</span>
<div class="hl" style="left:251px;top:234.12px;width:239.39999999999998px;height:1px;"></div>
<div class="" style="left:251px;top:234.12px;width:19.5px;height:1px;background:#f2f2f2"></div>
<span class="t " style="left:261.33px;top:222px;transform:scaleX(0.9300);transform-origin:100% 50%">9</span>
<svg style="left:286px;top:223px" width="9" height="9" viewBox="0 0 9 9"><g transform="translate(0.5 0.81)"><rect x="0.95" y="1" width="6.1" height="6.4" fill="#fff" stroke="#8c8c8c" stroke-width="0.9"/><path d="M1.6 3.7 L3.1 5.5 L7.2 1.2" fill="none" stroke="#0a0a0a" stroke-width="1.3"/></g></svg>
<span class="t " style="left:314.20px;top:222px;transform:scaleX(0.9281);transform-origin:0 50%">Slabs Floor - (Floor:Default - 30 cm outside)</span>
<div class="hl" style="left:251px;top:247.35px;width:239.39999999999998px;height:1px;"></div>
<div class="" style="left:251px;top:247.35px;width:19.5px;height:1px;background:#f2f2f2"></div>
<span class="t " style="left:256.67px;top:235px;transform:scaleX(0.9300);transform-origin:100% 50%">10</span>
<svg style="left:286px;top:237px" width="9" height="9" viewBox="0 0 9 9"><g transform="translate(0.5 0.04)"><rect x="0.95" y="1" width="6.1" height="6.4" fill="#fff" stroke="#8c8c8c" stroke-width="0.9"/><path d="M1.6 3.7 L3.1 5.5 L7.2 1.2" fill="none" stroke="#0a0a0a" stroke-width="1.3"/></g></svg>
<span class="t " style="left:314.20px;top:235px;transform:scaleX(0.9132);transform-origin:0 50%">Slabs Baseslab - (Floor:Default - 30 cm outside)</span>
<div class="hl" style="left:251px;top:260.58px;width:239.39999999999998px;height:1px;"></div>
<div class="" style="left:251px;top:260.58px;width:19.5px;height:1px;background:#f2f2f2"></div>
<span class="t " style="left:257.30px;top:249px;transform:scaleX(0.9300);transform-origin:100% 50%">11</span>
<svg style="left:286px;top:250px" width="9" height="9" viewBox="0 0 9 9"><g transform="translate(0.5 0.27)"><rect x="0.95" y="1" width="6.1" height="6.4" fill="#fff" stroke="#8c8c8c" stroke-width="0.9"/><path d="M1.6 3.7 L3.1 5.5 L7.2 1.2" fill="none" stroke="#0a0a0a" stroke-width="1.3"/></g></svg>
<span class="t " style="left:314.20px;top:249px;transform:scaleX(0.9321);transform-origin:0 50%">Roof - (Basic Roof:Roof - Default - 30 cm)</span>
<div class="hl" style="left:251px;top:273.81px;width:239.39999999999998px;height:1px;"></div>
<div class="" style="left:251px;top:273.81px;width:19.5px;height:1px;background:#f2f2f2"></div>
<span class="t " style="left:256.67px;top:262px;transform:scaleX(0.9300);transform-origin:100% 50%">12</span>
<svg style="left:286px;top:263px" width="9" height="9" viewBox="0 0 9 9"><g transform="translate(0.5 0.5)"><rect x="0.95" y="1" width="6.1" height="6.4" fill="#fff" stroke="#8c8c8c" stroke-width="0.9"/><path d="M1.6 3.7 L3.1 5.5 L7.2 1.2" fill="none" stroke="#0a0a0a" stroke-width="1.3"/></g></svg>
<span class="t " style="left:314.20px;top:262px;transform:scaleX(0.9299);transform-origin:0 50%">Stair landing</span>
<div class="hl" style="left:251px;top:287.04px;width:239.39999999999998px;height:1px;"></div>
<div class="" style="left:251px;top:287.04px;width:19.5px;height:1px;background:#f2f2f2"></div>
<span class="t " style="left:256.67px;top:275px;transform:scaleX(0.9300);transform-origin:100% 50%">13</span>
<svg style="left:286px;top:276px" width="9" height="9" viewBox="0 0 9 9"><g transform="translate(0.5 0.73)"><rect x="0.95" y="1" width="6.1" height="6.4" fill="#fff" stroke="#8c8c8c" stroke-width="0.9"/><path d="M1.6 3.7 L3.1 5.5 L7.2 1.2" fill="none" stroke="#0a0a0a" stroke-width="1.3"/></g></svg>
<span class="t " style="left:314.20px;top:275px;transform:scaleX(0.9343);transform-origin:0 50%">Columns - (300)</span>
<div class="hl" style="left:251px;top:300.27px;width:239.39999999999998px;height:1px;"></div>
<div class="" style="left:251px;top:300.27px;width:19.5px;height:1px;background:#f2f2f2"></div>
<span class="t " style="left:256.67px;top:288px;transform:scaleX(0.9300);transform-origin:100% 50%">14</span>
<svg style="left:286px;top:289px" width="9" height="9" viewBox="0 0 9 9"><g transform="translate(0.5 0.96)"><rect x="0.95" y="1" width="6.1" height="6.4" fill="#fff" stroke="#8c8c8c" stroke-width="0.9"/><path d="M1.6 3.7 L3.1 5.5 L7.2 1.2" fill="none" stroke="#0a0a0a" stroke-width="1.3"/></g></svg>
<span class="t " style="left:314.20px;top:288px;transform:scaleX(0.9026);transform-origin:0 50%">Doors - (90 x 210 cm)</span>
<div class="hl" style="left:251px;top:313.5px;width:239.39999999999998px;height:1px;"></div>
<div class="" style="left:251px;top:313.5px;width:19.5px;height:1px;background:#f2f2f2"></div>
<span class="t " style="left:256.67px;top:301px;transform:scaleX(0.9300);transform-origin:100% 50%">15</span>
<svg style="left:286px;top:303px" width="9" height="9" viewBox="0 0 9 9"><g transform="translate(0.5 0.19)"><rect x="0.95" y="1" width="6.1" height="6.4" fill="#fff" stroke="#8c8c8c" stroke-width="0.9"/><path d="M1.6 3.7 L3.1 5.5 L7.2 1.2" fill="none" stroke="#0a0a0a" stroke-width="1.3"/></g></svg>
<span class="t " style="left:314.20px;top:301px;transform:scaleX(0.8991);transform-origin:0 50%">Doors - (100 x 210 cm)</span>
<div class="hl" style="left:251px;top:326.73px;width:239.39999999999998px;height:1px;"></div>
<div class="" style="left:251px;top:326.73px;width:19.5px;height:1px;background:#f2f2f2"></div>
<span class="t " style="left:256.67px;top:315px;transform:scaleX(0.9300);transform-origin:100% 50%">16</span>
<svg style="left:286px;top:316px" width="9" height="9" viewBox="0 0 9 9"><g transform="translate(0.5 0.42)"><rect x="0.95" y="1" width="6.1" height="6.4" fill="#fff" stroke="#8c8c8c" stroke-width="0.9"/><path d="M1.6 3.7 L3.1 5.5 L7.2 1.2" fill="none" stroke="#0a0a0a" stroke-width="1.3"/></g></svg>
<span class="t " style="left:314.20px;top:315px;transform:scaleX(0.9414);transform-origin:0 50%">Curtain wall</span>
<div class="hl" style="left:251px;top:339.96px;width:239.39999999999998px;height:1px;"></div>
<div class="" style="left:251px;top:339.96px;width:19.5px;height:1px;background:#f2f2f2"></div>
<span class="t " style="left:256.67px;top:328px;transform:scaleX(0.9300);transform-origin:100% 50%">17</span>
<svg style="left:286px;top:329px" width="9" height="9" viewBox="0 0 9 9"><g transform="translate(0.5 0.65)"><rect x="0.95" y="1" width="6.1" height="6.4" fill="#fff" stroke="#8c8c8c" stroke-width="0.9"/><path d="M1.6 3.7 L3.1 5.5 L7.2 1.2" fill="none" stroke="#0a0a0a" stroke-width="1.3"/></g></svg>
<span class="t " style="left:314.20px;top:328px;transform:scaleX(0.9081);transform-origin:0 50%">Windows (120 x 915 cm)</span>
<div class="hl" style="left:251px;top:353.19px;width:239.39999999999998px;height:1px;"></div>
<div class="" style="left:251px;top:353.19px;width:19.5px;height:1px;background:#f2f2f2"></div>
<span class="t " style="left:256.67px;top:341px;transform:scaleX(0.9300);transform-origin:100% 50%">18</span>
<svg style="left:286px;top:342px" width="9" height="9" viewBox="0 0 9 9"><g transform="translate(0.5 0.88)"><rect x="0.95" y="1" width="6.1" height="6.4" fill="#fff" stroke="#8c8c8c" stroke-width="0.9"/><path d="M1.6 3.7 L3.1 5.5 L7.2 1.2" fill="none" stroke="#0a0a0a" stroke-width="1.3"/></g></svg>
<span class="t " style="left:314.20px;top:341px;transform:scaleX(0.9095);transform-origin:0 50%">Railings</span>
<div class="hl" style="left:251px;top:366.42px;width:239.39999999999998px;height:1px;"></div>
<div class="" style="left:251px;top:366.42px;width:19.5px;height:1px;background:#f2f2f2"></div>
<span class="t " style="left:256.67px;top:354px;transform:scaleX(0.9300);transform-origin:100% 50%">19</span>
<svg style="left:286px;top:356px" width="9" height="9" viewBox="0 0 9 9"><g transform="translate(0.5 0.11)"><rect x="0.95" y="1" width="6.1" height="6.4" fill="#fff" stroke="#8c8c8c" stroke-width="0.9"/><path d="M1.6 3.7 L3.1 5.5 L7.2 1.2" fill="none" stroke="#0a0a0a" stroke-width="1.3"/></g></svg>
<span class="t " style="left:314.20px;top:354px;transform:scaleX(0.9257);transform-origin:0 50%">Floor covering 1</span>
<div class="hl" style="left:251px;top:379.65px;width:239.39999999999998px;height:1px;"></div>
<div class="" style="left:251px;top:379.65px;width:19.5px;height:1px;background:#f2f2f2"></div>
<span class="t " style="left:256.67px;top:368px;transform:scaleX(0.9300);transform-origin:100% 50%">20</span>
<svg style="left:286px;top:369px" width="9" height="9" viewBox="0 0 9 9"><g transform="translate(0.5 0.34)"><rect x="0.95" y="1" width="6.1" height="6.4" fill="#fff" stroke="#8c8c8c" stroke-width="0.9"/><path d="M1.6 3.7 L3.1 5.5 L7.2 1.2" fill="none" stroke="#0a0a0a" stroke-width="1.3"/></g></svg>
<span class="t " style="left:314.20px;top:368px;transform:scaleX(0.9340);transform-origin:0 50%">Floor covering 2</span>
<div class="hl" style="left:251px;top:392.88px;width:239.39999999999998px;height:1px;"></div>
<div class="" style="left:251px;top:392.88px;width:19.5px;height:1px;background:#f2f2f2"></div>
<span class="t " style="left:256.67px;top:381px;transform:scaleX(0.9300);transform-origin:100% 50%">21</span>
<svg style="left:286px;top:382px" width="9" height="9" viewBox="0 0 9 9"><g transform="translate(0.5 0.57)"><rect x="0.95" y="1" width="6.1" height="6.4" fill="#fff" stroke="#8c8c8c" stroke-width="0.9"/><path d="M1.6 3.7 L3.1 5.5 L7.2 1.2" fill="none" stroke="#0a0a0a" stroke-width="1.3"/></g></svg>
<span class="t " style="left:314.20px;top:381px;transform:scaleX(0.9340);transform-origin:0 50%">Floor covering 3</span>
<div class="hl" style="left:251px;top:406.11px;width:239.39999999999998px;height:1px;"></div>
<div class="" style="left:251px;top:406.11px;width:19.5px;height:1px;background:#f2f2f2"></div>
<span class="t " style="left:256.67px;top:394px;transform:scaleX(0.9300);transform-origin:100% 50%">22</span>
<svg style="left:286px;top:395px" width="9" height="9" viewBox="0 0 9 9"><g transform="translate(0.5 0.8)"><rect x="0.95" y="1" width="6.1" height="6.4" fill="#fff" stroke="#8c8c8c" stroke-width="0.9"/><path d="M1.6 3.7 L3.1 5.5 L7.2 1.2" fill="none" stroke="#0a0a0a" stroke-width="1.3"/></g></svg>
<span class="t " style="left:314.20px;top:394px;transform:scaleX(0.9029);transform-origin:0 50%">Stairs - (Cast-In-Place Stair:Stair)</span>
<div class="vl" style="left:270.2px;top:115.55px;width:1px;height:291.06px;"></div>
<div class="vl" style="left:309.4px;top:115.55px;width:1px;height:291.06px;"></div>
<div class="" style="left:491.6px;top:342.6px;width:1.8px;height:1.2px;background:#6a6a6a"></div>
<div class="" style="left:491.6px;top:345.3px;width:1.8px;height:1.2px;background:#6a6a6a"></div>
<div class="" style="left:491.6px;top:348.0px;width:1.8px;height:1.2px;background:#6a6a6a"></div>
<div class="" style="left:491.6px;top:350.70000000000005px;width:1.8px;height:1.2px;background:#6a6a6a"></div>
<div class="band" style="left:495px;top:99px;width:522px;height:15.2px;"></div>
<span class="t b" style="left:497.10px;top:100px;transform:scaleX(0.8873);transform-origin:0 50%">Selección</span>
<svg style="left:495px;top:119px" width="96" height="14" viewBox="0 0 96 14"><g transform="translate(0.5 0.3)"><path d="M1.5 6.45 H11.1 M6.3 1.8 V11.1" stroke="#333" stroke-width="1.3" fill="none"/><path d="M16.7 11.6 L17.85 8.23 L20.05 10.41 Z" fill="#f8f8f8" stroke="#8f8f8f" stroke-width="0.5"/><path d="M16.6 11.7 L17.1 10.2 L18.1 11.2 Z" fill="#3a3a3a"/><path d="M17.85 8.23 L24.32 1.69 L26.52 3.87 L20.05 10.41 Z" fill="#f3d545" stroke="#a59a58" stroke-width="0.55"/><path d="M23.7 2.3 L25.9 4.5" stroke="#857f4c" stroke-width="0.9"/><rect x="35.9" y="1.4" width="5.8" height="6.1" fill="#fff" stroke="#b0b0b0" stroke-width="0.7"/><rect x="31.6" y="4.4" width="6.7" height="6.9" rx="0.4" fill="#c9c9ca" stroke="#adadad" stroke-width="0.8"/><path d="M48.2 2.3 L56.2 10.6 M56.2 2.3 L48.2 10.6" stroke="#dc525e" stroke-width="1.9" fill="none"/><path d="M61.5 0.4 V12.2" stroke="#9a9a9a" stroke-width="0.9"/><path d="M67.6 8 L72.3 3.4 L77 8 Z" fill="#333"/><path d="M83 4.9 L87.7 9.7 L92.4 4.9 Z" fill="#333"/></g></svg>
<div class="" style="left:495px;top:136px;width:522px;height:165px;background:#fff"></div>
<div class="" style="left:495px;top:136px;width:522px;height:11.7px;background:#ededed"></div>
<div class="hs" style="left:536px;top:137.2px;width:1px;height:8.8px;"></div>
<div class="hs" style="left:688.2px;top:137.2px;width:1px;height:8.8px;"></div>
<div class="hs" style="left:733px;top:137.2px;width:1px;height:8.8px;"></div>
<div class="hs" style="left:1016px;top:137.2px;width:1px;height:8.8px;"></div>
<span class="t " style="left:499.00px;top:135px;transform:scaleX(0.9325);transform-origin:0 50%">Operador</span>
<span class="t " style="left:540.60px;top:135px;transform:scaleX(0.9307);transform-origin:0 50%">Parámetro</span>
<span class="t " style="left:692.90px;top:135px;transform:scaleX(0.9718);transform-origin:0 50%">Condición</span>
<span class="t " style="left:737.80px;top:135px;transform:scaleX(0.9452);transform-origin:0 50%">Valor</span>
<div class="sel" style="left:495px;top:147.7px;width:522px;height:13.3px;"></div>
<span class="t " style="left:512.20px;top:149px;transform:scaleX(0.9300);transform-origin:50% 50%">Y</span>
<span class="t " style="left:540.60px;top:149px;transform:scaleX(0.9208);transform-origin:0 50%">[Propiedad: BaseProperties] - Entity</span>
<span class="t " style="left:694.60px;top:149px;transform:scaleX(0.9091);transform-origin:0 50%">es igual a</span>
<span class="t " style="left:737.80px;top:149px;transform:scaleX(0.9465);transform-origin:0 50%">IfcWall</span>
<div class="hl" style="left:495px;top:160.5px;width:522px;height:1px;"></div>
<span class="t " style="left:512.20px;top:162px;transform:scaleX(0.9300);transform-origin:50% 50%">Y</span>
<span class="t " style="left:540.60px;top:162px;transform:scaleX(0.9278);transform-origin:0 50%">[Propiedad: BaseProperties] - Type Name</span>
<span class="t " style="left:694.60px;top:162px;transform:scaleX(0.9091);transform-origin:0 50%">es igual a</span>
<span class="t " style="left:737.80px;top:162px;transform:scaleX(0.9329);transform-origin:0 50%">Basic Wall:Default - 30 cm outside</span>
<div class="hl" style="left:495px;top:173.8px;width:522px;height:1px;"></div>
<div class="vl" style="left:536px;top:147.7px;width:1px;height:26.6px;"></div>
<div class="vl" style="left:688.2px;top:147.7px;width:1px;height:26.6px;"></div>
<div class="vl" style="left:733px;top:147.7px;width:1px;height:26.6px;"></div>
<div class="" style="left:751.0px;top:302px;width:1.3px;height:1.3px;background:#555"></div>
<div class="" style="left:753.9px;top:302px;width:1.3px;height:1.3px;background:#555"></div>
<div class="" style="left:756.8px;top:302px;width:1.3px;height:1.3px;background:#555"></div>
<div class="" style="left:759.7px;top:302px;width:1.3px;height:1.3px;background:#555"></div>
<div class="band" style="left:495px;top:305.2px;width:522px;height:15.2px;"></div>
<span class="t b" style="left:497.10px;top:306px;transform:scaleX(0.9007);transform-origin:0 50%">Unidades de obra</span>
<svg style="left:495px;top:325px" width="96" height="14" viewBox="0 0 96 14"><g transform="translate(0.5 0.5)"><path d="M1.5 6.45 H11.1 M6.3 1.8 V11.1" stroke="#333" stroke-width="1.3" fill="none"/><path d="M16.7 11.6 L17.85 8.23 L20.05 10.41 Z" fill="#f8f8f8" stroke="#8f8f8f" stroke-width="0.5"/><path d="M16.6 11.7 L17.1 10.2 L18.1 11.2 Z" fill="#3a3a3a"/><path d="M17.85 8.23 L24.32 1.69 L26.52 3.87 L20.05 10.41 Z" fill="#f3d545" stroke="#a59a58" stroke-width="0.55"/><path d="M23.7 2.3 L25.9 4.5" stroke="#857f4c" stroke-width="0.9"/><rect x="35.9" y="1.4" width="5.8" height="6.1" fill="#fff" stroke="#b0b0b0" stroke-width="0.7"/><rect x="31.6" y="4.4" width="6.7" height="6.9" rx="0.4" fill="#c9c9ca" stroke="#adadad" stroke-width="0.8"/><path d="M48.2 2.3 L56.2 10.6 M56.2 2.3 L48.2 10.6" stroke="#dc525e" stroke-width="1.9" fill="none"/><path d="M61.5 0.4 V12.2" stroke="#9a9a9a" stroke-width="0.9"/><path d="M67.6 8 L72.3 3.4 L77 8 Z" fill="#333"/><path d="M83 4.9 L87.7 9.7 L92.4 4.9 Z" fill="#333"/></g></svg>
<div class="" style="left:495px;top:342.2px;width:522px;height:266.8px;background:#fff"></div>
<div class="" style="left:495px;top:342.2px;width:522px;height:11.7px;background:#ededed"></div>
<div class="hs" style="left:532px;top:343.4px;width:1px;height:8.8px;"></div>
<div class="hs" style="left:567px;top:343.4px;width:1px;height:8.8px;"></div>
<div class="hs" style="left:600.8px;top:343.4px;width:1px;height:8.8px;"></div>
<div class="hs" style="left:862px;top:343.4px;width:1px;height:8.8px;"></div>
<div class="hs" style="left:899.3px;top:343.4px;width:1px;height:8.8px;"></div>
<div class="hs" style="left:951.3px;top:343.4px;width:1px;height:8.8px;"></div>
<div class="hs" style="left:965.2px;top:343.4px;width:1px;height:8.8px;"></div>
<div class="hs" style="left:979.2px;top:343.4px;width:1px;height:8.8px;"></div>
<div class="hs" style="left:1016px;top:343.4px;width:1px;height:8.8px;"></div>
<span class="t " style="left:498.80px;top:341px;transform:scaleX(0.9390);transform-origin:0 50%">Capítulo</span>
<span class="t " style="left:537.50px;top:341px;transform:scaleX(0.9568);transform-origin:0 50%">Código</span>
<span class="t " style="left:571.70px;top:341px;transform:scaleX(0.9304);transform-origin:0 50%">Unidad</span>
<span class="t " style="left:605.50px;top:341px;transform:scaleX(0.8910);transform-origin:0 50%">Referencia</span>
<span class="t " style="left:866.50px;top:341px;transform:scaleX(0.9440);transform-origin:0 50%">Fórmula</span>
<span class="t " style="left:904.40px;top:341px;transform:scaleX(0.9300);transform-origin:0 50%">B</span>
<span class="t " style="left:955.60px;top:341px;transform:scaleX(0.9300);transform-origin:0 50%">C</span>
<span class="t " style="left:969.40px;top:341px;transform:scaleX(0.9300);transform-origin:0 50%">D</span>
<span class="t " style="left:983.70px;top:341px;transform:scaleX(0.9598);transform-origin:0 50%">Agrupar</span>
<div class="sel" style="left:495px;top:353.9px;width:522px;height:13.3px;"></div>
<span class="t " style="left:498.80px;top:355px;transform:scaleX(0.7771);transform-origin:0 50%">FFX</span>
<span class="t " style="left:537.50px;top:355px;transform:scaleX(0.7853);transform-origin:0 50%">FFX020</span>
<span class="t " style="left:571.70px;top:355px;transform:scaleX(0.9933);transform-origin:0 50%">m<span style="position:relative;font-size:5px;top:-3.2px;left:0.2px">2</span></span>
<span class="t " style="left:605.50px;top:355px;transform:scaleX(0.9298);transform-origin:0 50%">Hoja exterior de fachada de dos hojas, con apoyo parcial sobre el forja...</span>
<span class="t " style="left:904.40px;top:355px;transform:scaleX(0.8947);transform-origin:0 50%">NetSideArea</span>
<span class="t " style="left:995.00px;top:355px;transform:scaleX(0.9300);transform-origin:50% 50%">B</span>
<div class="hl" style="left:495px;top:366.7px;width:522px;height:1px;"></div>
<span class="t " style="left:498.80px;top:368px;transform:scaleX(0.7813);transform-origin:0 50%">FFT</span>
<span class="t " style="left:537.50px;top:368px;transform:scaleX(0.7979);transform-origin:0 50%">FFT020</span>
<span class="t " style="left:571.70px;top:368px;transform:scaleX(0.9933);transform-origin:0 50%">m<span style="position:relative;font-size:5px;top:-3.2px;left:0.2px">2</span></span>
<span class="t " style="left:605.50px;top:368px;transform:scaleX(0.9250);transform-origin:0 50%">Hoja interior de fachada de dos hojas, de 5 cm de espesor, de fábrica d...</span>
<span class="t " style="left:904.40px;top:368px;transform:scaleX(0.8947);transform-origin:0 50%">NetSideArea</span>
<span class="t " style="left:995.00px;top:368px;transform:scaleX(0.9300);transform-origin:50% 50%">B</span>
<div class="hl" style="left:495px;top:380.0px;width:522px;height:1px;"></div>
<div class="vl" style="left:532px;top:353.9px;width:1px;height:26.6px;"></div>
<div class="vl" style="left:567px;top:353.9px;width:1px;height:26.6px;"></div>
<div class="vl" style="left:600.8px;top:353.9px;width:1px;height:26.6px;"></div>
<div class="vl" style="left:862px;top:353.9px;width:1px;height:26.6px;"></div>
<div class="vl" style="left:899.3px;top:353.9px;width:1px;height:26.6px;"></div>
<div class="vl" style="left:951.3px;top:353.9px;width:1px;height:26.6px;"></div>
<div class="vl" style="left:965.2px;top:353.9px;width:1px;height:26.6px;"></div>
<div class="vl" style="left:979.2px;top:353.9px;width:1px;height:26.6px;"></div>
</body></html>
